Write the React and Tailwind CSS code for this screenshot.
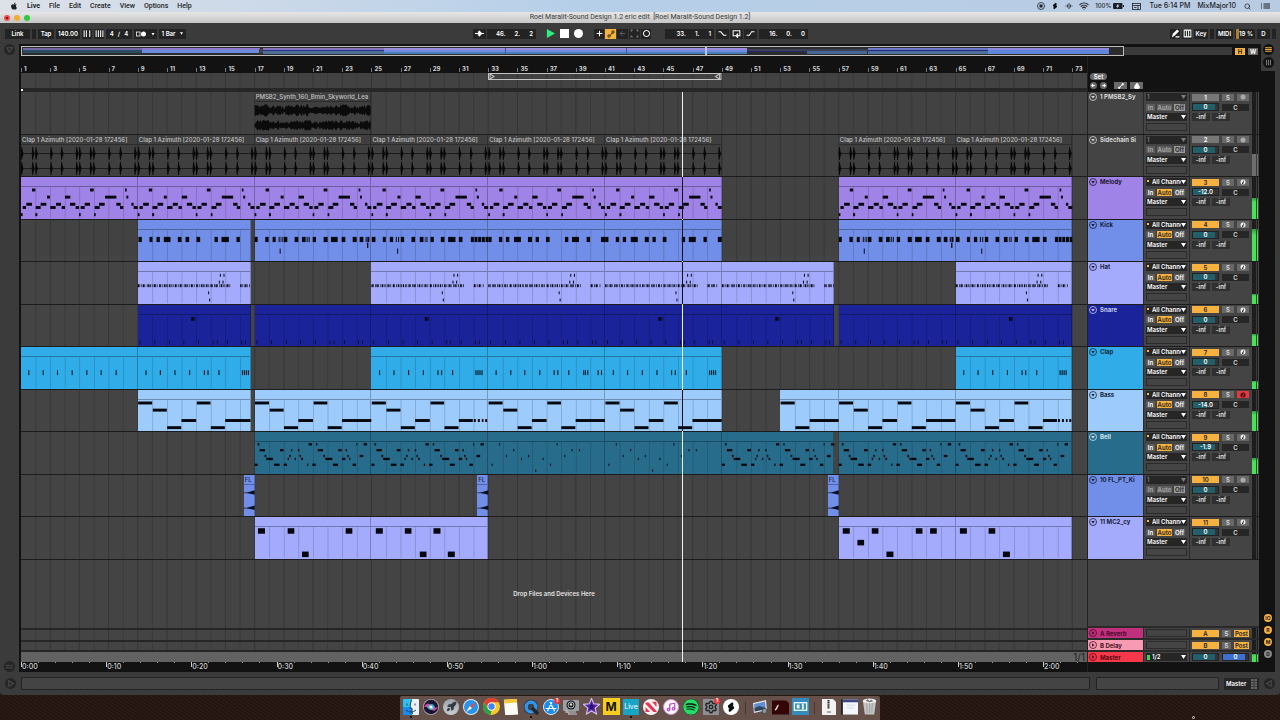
import React from "react";
import { Search, Wifi, Rocket, Lock, Settings, Music } from "lucide-react";
import { FaApple, FaSpotify } from "react-icons/fa";

/* One bar is 43.8 drawing units wide, a lane is 128 units tall. */
const BAR = 43.8;
const TOTAL = 73;
const LANE_W = BAR * TOTAL;
const LANE_H = 128;

const row = (y, h, spans) => spans.map(([a, b]) => [a, b, y, h]);
const ticks = (y, h, w, xs) => xs.map((x) => [x, x + w, y, h]);

const MELODY = [
  ...row(40, 9, [[33, 43], [207, 218], [312, 317]]),
  ...row(62, 9, [[78, 87], [132, 148], [252, 286], [316, 322]]),
  ...row(84, 9, [[16, 33], [59, 76], [105, 120], [147, 163], [191, 207], [234, 251], [286, 299], [331, 338]]),
  ...row(94, 9, [[5, 15], [44, 59], [88, 104], [122, 132], [164, 174], [179, 191], [221, 236], [297, 307], [338, 350]]),
  ...row(116, 9, [[0, 5], [43, 49], [174, 179], [219, 224]]),
];
const KICK_A = row(60, 16, [[2, 12], [35, 44], [56, 66], [78, 98], [120, 131], [143, 154], [176, 187], [230, 240], [251, 273], [296, 306]]);
const KICK_B = [
  ...row(60, 16, [[0, 9], [32, 42], [54, 63], [72, 75], [78, 80], [82, 84], [87, 98], [120, 131], [142, 153], [156, 159], [162, 165], [174, 184], [207, 219], [229, 249], [261, 272], [294, 306], [315, 326], [333, 336], [338, 344]]),
  [75, 78, 96, 16],
  [337, 341, 78, 16],
];
const KICK_C = [
  ...row(60, 16, [[1, 12], [34, 43], [55, 65], [73, 76], [80, 83], [88, 98], [120, 131], [145, 156], [160, 162], [165, 168], [177, 187], [208, 219], [230, 252], [262, 273], [298, 307], [309, 318], [320, 329], [331, 340], [342, 350]]),
  [77, 80, 96, 16],
];
const KICK_D = row(60, 16, [[0, 10], [32, 42], [53, 63], [77, 98], [119, 131], [142, 152], [173, 184], [230, 240], [251, 272], [295, 305], [338, 350]]);
const hatRun = (from, to) => {
  const out = [];
  const step = [5, 6, 4, 5, 7, 4, 6];
  let x = from;
  for (let i = 0; x < to; i++) {
    out.push([x, x + (i % 3 === 0 ? 4 : 2), 73, 9]);
    x += step[i % step.length];
  }
  return out;
};
const HAT = [
  ...hatRun(0, 214),
  ...hatRun(218, 276),
  ...hatRun(307, 337),
  ...ticks(41, 9, 3, [246, 257]),
  ...ticks(62, 9, 3, [243, 254]),
  [211, 214, 95, 9],
  [214, 217, 117, 9],
];
const SNARE = ticks(115, 12, 2, [6, 50, 94, 137, 181, 225, 237, 268, 311, 322]);
const SNARE_FILL = [...SNARE, [160, 168, 43, 12], [170, 172, 43, 12]];
const CLAP_A = ticks(79, 15, 3, [22, 65, 108, 152, 196, 239, 284]);
const CLAP_B = ticks(79, 15, 3, [23, 66, 110, 154, 198, 209, 242, 312, 318, 324, 330]);
const CLAP_C = ticks(79, 15, 3, [22, 66, 108, 153, 196, 207, 240, 285, 290, 297, 328, 338]);
const BASS_BASE = [[1, 43, 40, 9], [45, 87, 62, 9], [88, 130, 116, 9], [131, 175, 94, 9], [177, 218, 40, 9], [219, 261, 116, 9]];
const BASS = [...BASS_BASE, [262, 350, 94, 9]];
const BASS_DOTS = [...BASS_BASE, [262, 304, 94, 9], [307, 313, 94, 9], [319, 325, 94, 9], [331, 336, 94, 9], [341, 347, 94, 9]];
const BASS_CUT = [...BASS_BASE, [262, 338, 94, 9]];
const BASS_SHORT = [[1, 43, 40, 9], [45, 87, 116, 9], [88, 175, 94, 9]];
const BELL = [
  ...row(38, 7, [[9, 14], [162, 172], [184, 188], [305, 308], [327, 337]]),
  ...row(56, 7, [[15, 31], [76, 87], [109, 113], [130, 134], [189, 205], [251, 261], [273, 277]]),
  ...row(74, 7, [[30, 35], [104, 108], [135, 139], [206, 211], [278, 282], [315, 326]]),
  ...row(83, 7, [[35, 55], [99, 103], [120, 124], [140, 145], [212, 233], [262, 272], [283, 287]]),
  ...row(101, 7, [[0, 9], [58, 75], [87, 97], [157, 161], [173, 183], [235, 250], [294, 304]]),
];
const BELL_SPARSE = [
  ...ticks(38, 7, 3, [32, 205]),
  ...ticks(56, 7, 3, [75, 250, 272]),
  ...ticks(74, 7, 3, [53, 119, 228]),
  ...ticks(83, 7, 3, [98, 163]),
  ...ticks(101, 7, 3, [10, 185]),
  ...ticks(119, 7, 3, [141]),
];
const MC_1 = [...row(43, 17, [[10, 31], [99, 119], [273, 293]]), [142, 162, 115, 17]];
const MC_2 = [...row(43, 17, [[13, 34], [100, 120], [186, 207]]), [145, 165, 115, 17], [229, 250, 115, 17]];
const MC_3 = [...row(43, 17, [[12, 33], [99, 119], [231, 251], [274, 294]]), [56, 76, 79, 17], [143, 164, 115, 17]];
const MC_4 = [...row(43, 17, [[13, 34], [99, 119]]), [142, 163, 115, 17]];

/* clip: [start bar, end bar, notes] */
const SIDE = "Clap 1 Azimuth [2020-01-28 172456]";
const eights = (bars, notes) => bars.map((b) => [b, b + 8, notes]);

const TRACKS = [
  { name: "1 PMSB2_Sy", n: 1, bg: "bg-[#444444]", text: "text-[#d8d8d8]", audio: true, wave: "synth", label: "PMSB2_Synth_160_Bmin_Skyworld_Lea", clips: [[17, 25, []]], off: true, vol: "0", meter: 0 },
  { name: "Sidechain Si", n: 2, bg: "bg-[#444444]", text: "text-[#d8d8d8]", audio: true, wave: "claps", label: SIDE, clips: eights([1, 9, 17, 25, 33, 41, 57, 65], []), off: true, vol: "0", meter: 52, grayMeter: true },
  { name: "Melody", n: 3, bg: "bg-[#a083e6]", text: "text-[#1c1430]", clips: eights([1, 9, 17, 25, 33, 41, 57, 65], MELODY), vol: "-12.0", meter: 50, darkHead: true },
  { name: "Kick", n: 4, bg: "bg-[#718fe8]", text: "text-[#141c38]", clips: [[9, 16.75, KICK_A], [17, 25, KICK_B], [25, 33, KICK_C], [33, 41, KICK_D], [41, 49, KICK_D], [57, 65, KICK_B], [65, 73, KICK_C]], vol: "0", meter: 78, darkHead: true },
  { name: "Hat", n: 5, bg: "bg-[#a4abfd]", text: "text-[#1a1c38]", clips: [[9, 16.75, HAT], [25, 33, HAT], [33, 41, HAT], [41, 49, HAT], [49, 56.7, HAT], [65, 73, HAT]], vol: "0", meter: 24, darkHead: true },
  { name: "Snare", n: 6, bg: "bg-[#1a2399]", text: "text-[#c8ccf0]", clips: [[9, 16.75, SNARE_FILL], [17, 25, SNARE], [25, 33, SNARE_FILL], [33, 41, SNARE], [41, 49, SNARE_FILL], [49, 56.7, SNARE_FILL], [57, 65, SNARE], [65, 73, SNARE_FILL]], vol: "0", meter: 30 },
  { name: "Clap", n: 7, bg: "bg-[#30ade9]", text: "text-[#0d2a3a]", clips: [[1, 9, CLAP_A], [9, 16.75, CLAP_B], [25, 33, CLAP_B], [33, 41, CLAP_C], [41, 49, CLAP_B], [65, 73, CLAP_B]], vol: "0", meter: 20 },
  { name: "Bass", n: 8, bg: "bg-[#9ccbfc]", text: "text-[#16283a]", clips: [[9, 16.75, BASS_CUT], [17, 25, BASS], [25, 33, BASS_DOTS], [33, 41, BASS], [41, 49, BASS], [53, 57, BASS_SHORT], [57, 65, BASS], [65, 73, BASS_DOTS]], vol: "-14.0", meter: 49, armed: true, darkHead: true },
  { name: "Bell", n: 9, bg: "bg-[#286c8c]", text: "text-[#cfe4ee]", clips: [[17, 25, BELL], [25, 33, BELL], [33, 41, BELL_SPARSE], [41, 49, BELL_SPARSE], [49, 56.7, BELL], [57, 65, BELL], [65, 73, BELL]], vol: "-1.9", meter: 38 },
  { name: "10 FL_PT_Ki", n: 10, bg: "bg-[#718fe8]", text: "text-[#141c38]", wave: "hit", label: "FL", clips: [[16.25, 17, []], [32.25, 33, []], [56.25, 57, []]], off: true, vol: "0", meter: 0 },
  { name: "11 MC2_cy", n: 11, bg: "bg-[#a4abfd]", text: "text-[#1a1c38]", clips: [[17, 25, MC_1], [25, 33, MC_2], [57, 65, MC_3], [65, 73, MC_4]], vol: "0", meter: 0 },
];

const pct = (bars) => `${(bars / TOTAL) * 100}%`;

function synthPath(x0, x1, cy, amp) {
  const top = [];
  const bottom = [];
  for (let x = x0, i = 0; x <= x1; x += 3, i++) {
    const noise = Math.abs(Math.sin(i * 12.9898 + cy) * 43758.5453) % 1;
    const env = 0.6 + 0.1 * Math.sin(i / 6) + 0.6 * (noise - 0.5);
    top.push(`${x},${cy - amp * env}`);
    bottom.unshift(`${x},${cy + amp * (env * 0.95)}`);
  }
  return [...top, ...bottom].join(" ");
}

const CLAP_HITS = [1, 34, 44, 89, 121, 166, 175, 208, 217, 263, 297, 341];

function Waves({ kind, start, end }) {
  const x0 = (start - 1) * BAR;
  const x1 = (end - 1) * BAR;
  if (kind === "synth") {
    return (
      <g fill="#0b0b0b">
        <polygon points={synthPath(x0, x1, 57, 20)} />
        <polygon points={synthPath(x0, x1, 103, 18)} />
      </g>
    );
  }
  if (kind === "claps") {
    return (
      <g fill="#080808">
        {[57, 103].map((cy) => (
          <g key={cy}>
            <rect x={x0} y={cy - 1} width={x1 - x0} height="2" />
            {CLAP_HITS.map((h) => (
              <polygon
                key={h}
                points={`${x0 + h - 2},${cy} ${x0 + h},${cy - 20} ${x0 + h + 2},${cy - 21} ${x0 + h + 4},${cy - 8} ${x0 + h + 7},${cy} ${x0 + h + 4},${cy + 9} ${x0 + h + 2},${cy + 21} ${x0 + h},${cy + 20}`}
              />
            ))}
          </g>
        ))}
      </g>
    );
  }
  return (
    <g fill="#0a0f20">
      {[55, 102].map((cy) => (
        <g key={cy}>
          <rect x={x0} y={cy - 1} width={x1 - x0} height="2" />
          <polygon points={`${x0 + 8},${cy} ${x1},${cy - 8} ${x1},${cy + 6}`} />
        </g>
      ))}
    </g>
  );
}

function Lane({ track }) {
  return (
    <div className="relative overflow-hidden border-b border-[#1c1c1c]">
      {track.clips.map(([s, e]) => (
        <div
          key={s}
          className={`absolute inset-y-0 overflow-hidden border-r border-black/25 ${track.audio ? "bg-[#3f3f3f]" : track.bg}`}
          style={{ left: pct(s - 1), width: pct(e - s) }}
        >
          <div className="h-[10px] border-b border-black/30 pl-px text-[6px] leading-[9px] font-medium whitespace-nowrap">
            <span className={track.audio ? "text-[#c4c4c4]" : "text-[#1a2550]"}>{track.label}</span>
          </div>
        </div>
      ))}
      <svg viewBox={`0 0 ${LANE_W} ${LANE_H}`} preserveAspectRatio="none" className="absolute inset-0 h-full w-full" aria-hidden="true">
        {track.clips.map(([s, e, notes]) => {
          const lines = [];
          for (let b = Math.ceil(s + 0.01); b < e; b++) lines.push(b);
          return (
            <g key={s}>
              {!track.audio &&
                lines.map((b) => (
                  <rect key={b} x={(b - 1) * BAR} y="31" width="2" height="96" fill="#000" opacity="0.22" />
                ))}
              {notes.map(([a, b, y, h], i) => (
                <rect key={i} x={(s - 1) * BAR + a} y={y - h / 2} width={b - a} height={h} fill="#07080e" />
              ))}
              {track.wave && <Waves kind={track.wave} start={s} end={e} />}
            </g>
          );
        })}
      </svg>
      {track.darkHead && <span className="absolute inset-y-0 left-[62%] z-20 w-px bg-[#10101c]" />}
    </div>
  );
}

function Select({ label, value, dim, children }) {
  return (
    <div className="relative h-2 w-full bg-[#262626]">
      <select
        aria-label={label}
        defaultValue={value}
        className={`block h-2 w-full appearance-none overflow-hidden bg-transparent pr-[6px] text-[6px] leading-[8px] font-semibold ${children ? "pl-[6px]" : "pl-px"} ${dim ? "text-[#7c7c7c]" : "text-white"}`}
      >
        <option>{value}</option>
      </select>
      {children}
      <svg viewBox="0 0 10 8" className={`pointer-events-none absolute top-[2px] right-px h-1 w-[5px] ${dim ? "fill-[#7c7c7c]" : "fill-white"}`} aria-hidden="true">
        <path d="M0 0h10L5 8z" />
      </svg>
    </div>
  );
}

const TINY = "flex h-[7px] items-center justify-center text-[6px] leading-[7px] font-semibold";

function NameCircle({ play }) {
  return (
    <svg viewBox="0 0 16 16" className="h-2 w-2 flex-none" fill="none" stroke="currentColor" strokeWidth="1.6" aria-hidden="true">
      <circle cx="8" cy="8" r="7" />
      <path d={play ? "M6 4.5L11 8l-5 3.5z" : "M4.5 6h7L8 11z"} fill="currentColor" stroke="none" />
    </svg>
  );
}

function Meter({ level, gray }) {
  return (
    <div className="mr-px flex items-end gap-px bg-[#3a3a3a]">
      {[0, 1].map((i) => (
        <div key={i} className={`flex h-full flex-col justify-end ${i ? "w-px" : "w-1"} bg-[#1d1d1d]`}>
          <div className={gray ? "bg-[#6e6e6e]" : "bg-linear-to-b from-[#2f9a40] to-[#45e35a] to-20%"} style={{ height: `${level}%` }} />
        </div>
      ))}
    </div>
  );
}

function Volume({ value, fill }) {
  return (
    <div className="grid h-2 w-[27px] border border-[#222] bg-[#333] *:col-start-1 *:row-start-1">
      <div className={`h-[6px] bg-[#235f6b] ${fill}`} />
      <span className="text-center text-[6px] leading-[6px] font-semibold text-white">{value}</span>
    </div>
  );
}

function TrackHeader({ t }) {
  const active = t.n > 2;
  return (
    <div className="flex gap-px border-b border-[#1c1c1c]">
      <div className={`flex w-[55px] flex-none gap-[3px] overflow-hidden pt-px pl-px ${t.bg} ${t.text}`}>
        <NameCircle />
        <span className="text-[6px] leading-[8px] font-bold whitespace-nowrap">{t.name}</span>
      </div>
      <div className="flex w-[45px] flex-none flex-col gap-[2px] bg-[#444] px-[2px] pt-px">
        <Select label={`${t.name} input`} value={t.off ? "1" : "All Channels"} dim={t.off}>
          {!t.off && <span className="absolute top-[2px] left-px h-[2px] w-[2px] bg-[#ffb84d]" />}
        </Select>
        <div className="flex h-2 items-center gap-[2px]">
          <button className={`${TINY} w-[9px] bg-[#5c5c5c] ${t.off ? "text-[#aaa]" : "text-white"}`}>In</button>
          <button className={`${TINY} w-[15px] ${t.off ? "bg-[#5c5c5c] text-[#aaa]" : "bg-[#f7b13f] text-[#222]"}`}>Auto</button>
          <button className={`${TINY} w-[11px] ${t.off ? "bg-[#9a9a9a] text-[#222]" : "bg-[#5c5c5c] text-white"}`}>Off</button>
        </div>
        <Select label={`${t.name} output`} value="Master" />
        <div className="h-[8px] border border-[#2a2a2a]" />
      </div>
      <div className="flex flex-1 justify-between bg-[#444] pl-[2px]">
        <div className="flex flex-col gap-[2px] pt-px">
          <div className="flex h-2 items-center gap-[3px]">
            <button aria-label={`Track ${t.n} on`} className={`${TINY} w-[27px] ${active ? "bg-[#f7b13f] text-[#222]" : "bg-[#777] text-white"}`}>{t.n}</button>
            <button aria-label={`Solo ${t.name}`} className={`${TINY} w-[12px] bg-[#686868] text-[#ddd]`}>S</button>
            <button aria-label={`Arm ${t.name}`} className={`${TINY} w-[12px] ${t.armed ? "bg-[#e8363f]" : "bg-[#686868]"}`}>
              <svg viewBox="0 0 12 12" className="h-[6px] w-[6px]" aria-hidden="true">
                <circle cx="6" cy="6" r="5" fill={t.off ? "#aaa" : t.armed ? "#3a0a0c" : "#eee"} />
                {!t.off && <path d="M6 2.5v4.2a1.6 1.6 0 1 0 1 1.4V4.8h1.5z" fill={t.armed ? "#e8363f" : "#222"} />}
              </svg>
            </button>
          </div>
          <div className="flex h-2 items-center gap-[3px]">
            <Volume value={t.vol} fill={t.vol === "-12.0" || t.vol === "-14.0" ? "w-[14px]" : "w-[22px]"} />
            <div className="h-[7px] w-[27px] bg-[#262626] text-center text-[6px] leading-[7px] font-semibold text-[#ddd]">C</div>
          </div>
          <div className="flex h-2 items-center gap-[2px] text-center text-[6px] leading-[8px] font-semibold text-[#e4e4e4]">
            <span className="w-[18px] bg-[#303030]">-inf</span>
            <span className="w-[18px] bg-[#303030]">-inf</span>
          </div>
        </div>
        <Meter level={t.meter} gray={t.grayMeter} />
      </div>
    </div>
  );
}

function ReturnRow({ name, letter, bg, text }) {
  return (
    <div className="flex h-3 gap-px border-b-2 border-[#2a2a2a]">
      <div className={`flex w-[55px] flex-none items-center gap-[3px] pl-px ${bg} ${text}`}>
        <NameCircle play />
        <span className="text-[6px] font-bold">{name}</span>
      </div>
      <div className="w-[45px] flex-none bg-[#444] px-[2px] py-px">
        <div className="h-full border border-[#2a2a2a]" />
      </div>
      <div className="flex flex-1 justify-between bg-[#444] pl-[2px]">
        <div className="flex items-center gap-[3px]">
          <button className={`${TINY} w-[27px] bg-[#f7b13f] text-[#222]`}>{letter}</button>
          <button aria-label={`Solo ${name}`} className={`${TINY} w-[9px] bg-[#686868] text-[#ddd]`}>S</button>
          <button className={`${TINY} w-[15px] bg-[#f7b13f] text-[#222]`}>Post</button>
        </div>
        <Meter level={0} />
      </div>
    </div>
  );
}

function MenuBar() {
  return (
    <header className="flex h-3 items-center justify-between bg-linear-to-r from-[#dde1e8] via-[#b6cfe9] via-45% to-[#b9cbe2] text-[7px] leading-[12px] text-[#1b1f26]">
      <nav className="flex items-center gap-[9px] pl-[10px] font-['Roboto','Inter',sans-serif]">
        <FaApple className="h-2 w-2" />
        {["Live", "File", "Edit", "Create", "View", "Options", "Help"].map((m, i) => (
          <a key={m} href="#" className={i ? "font-medium" : "font-bold"}>{m}</a>
        ))}
      </nav>
      <div className="flex items-center gap-[6px] pr-[10px] font-medium whitespace-nowrap">
        <svg viewBox="0 0 16 16" className="h-2 w-2" aria-hidden="true"><circle cx="8" cy="8" r="7" fill="none" stroke="currentColor" strokeWidth="1.5" /><rect x="5" y="5" width="6" height="6" fill="currentColor" /></svg>
        <SpliceMark className="h-2 w-2" color="#111" />
        <svg viewBox="0 0 16 16" className="h-2 w-2" stroke="currentColor" strokeWidth="1.6" aria-hidden="true"><path d="M2 7v2M5 5v6M8 2v12M11 5v6M14 7v2" /></svg>
        <Wifi className="h-[10px] w-[10px]" strokeWidth={2.5} />
        <span className="flex items-center gap-[2px] text-[6px]">100%
          <svg viewBox="0 0 22 12" className="h-[6px] w-[11px]" aria-hidden="true"><rect width="19" height="12" rx="2" fill="#1b1f26" /><rect x="20" y="4" width="2" height="4" fill="#1b1f26" /><path d="M11 1L6 7h3l-1 4 5-6h-3z" fill="#cfe0f2" /></svg>
        </span>
        <svg viewBox="0 0 18 14" className="mx-[2px] h-[7px] w-[9px]" fill="none" stroke="currentColor" strokeWidth="1.6" aria-hidden="true"><rect x="1" y="1" width="16" height="12" /><path d="M1 5h16M12 5v8M4 9h5" /></svg>
        <span className="pr-px">Tue 6:14 PM</span>
        <span className="pr-[2px]">MixMajor10</span>
        <Search className="h-[7px] w-[7px]" strokeWidth={2.5} />
        <svg viewBox="0 0 18 12" className="ml-[4px] h-[6px] w-[9px]" stroke="currentColor" strokeWidth="2" aria-hidden="true"><path d="M0 2h2M5 2h13M0 6h2M5 6h13M0 10h2M5 10h13" /></svg>
      </div>
    </header>
  );
}

function TitleBar() {
  return (
    <div className="grid h-[11px] grid-cols-[1fr_auto_1fr] items-center bg-linear-to-b from-[#e6e6e6] to-[#c6c6c6] px-1 leading-[11px] text-[#3a3a3a]">
      <div className="flex gap-1">
        <button aria-label="Close" className="flex h-[6px] w-[6px] items-center justify-center rounded-full bg-[#ee4c4f]"><span className="h-[2px] w-[2px] rounded-full bg-[#5a0a0a]" /></button>
        <button aria-label="Minimise" className="h-[6px] w-[6px] rounded-full bg-[#f2ae2c]" />
        <button aria-label="Zoom" className="h-[6px] w-[6px] rounded-full bg-[#2fc840]" />
      </div>
      <h1 className="font-['Roboto','Inter',sans-serif] text-[7px] leading-[11px] whitespace-pre">Roel Maralit-Sound Design 1.2 eric edit  [Roel Maralit-Sound Design 1.2]</h1>
    </div>
  );
}

const BOX = "flex h-[10px] items-center justify-center text-[6px] leading-[10px] font-semibold";
const DARK = "bg-[#232323] text-white";

function Icon({ d, label, className = "", tone = "text-white", fill = "none" }) {
  return (
    <button aria-label={label} className={`${BOX} bg-[#232323] ${tone} ${className}`}>
      <svg viewBox="0 0 16 16" className="h-[9px] w-[9px]" fill={fill} stroke="currentColor" strokeWidth="1.8" aria-hidden="true"><path d={d} /></svg>
    </button>
  );
}

function Position({ values, label }) {
  return (
    <div aria-label={label} className={`${BOX} ${DARK} w-[49px] justify-end gap-[9px] pr-[3px]`}>
      {values.map((v, i) => <span key={i}>{v}{i < 2 && "."}</span>)}
    </div>
  );
}

function Transport() {
  return (
    <div className="grid h-[21px] grid-cols-[1fr_auto_1fr] items-center bg-[#3b3b3b] pr-[4px] pl-[5px]">
      <div className="flex gap-[2px]">
        <button className={`${BOX} ${DARK} w-[25px]`}>Link</button>
        <span className={`${BOX} ${DARK} w-[4px]`} />
        <button className={`${BOX} ${DARK} w-[16px]`}>Tap</button>
        <div className={`${BOX} ${DARK} w-[24px]`}>140.00</div>
        <Icon label="Nudge down" className="w-[10px]" d="M2 2v12M6 2v12M12 2v12" />
        <Icon label="Nudge up" className="w-[10px]" d="M2 2v12M6 2v12M10 2v12M14 2v12" />
        <div className={`${BOX} ${DARK} w-[26px] gap-1`}><span>4</span><span>/</span><span>4</span></div>
        <button aria-label="Metronome" className={`${BOX} ${DARK} w-[23px]`}>
          <svg viewBox="0 0 38 12" className="h-[6px] w-[19px]" aria-hidden="true"><rect x="1" y="2" width="7" height="8" fill="none" stroke="#fff" strokeWidth="1.5" /><circle cx="15" cy="6" r="5" fill="#fff" /><path d="M31 4h6l-3 5z" fill="#fff" /></svg>
        </button>
        <button className={`${BOX} ${DARK} w-[27px] gap-[5px]`}>1 Bar<svg viewBox="0 0 6 5" className="h-[3px] w-[3px]" aria-hidden="true"><path d="M0 0h6L3 5z" fill="#fff" /></svg></button>
      </div>
      <div className="flex items-center">
        <Icon label="Follow" className="mr-px w-[13px]" d="M0 8h16M6 4v8M8 4l4 4-4 4z" fill="currentColor" />
        <Position label="Arrangement position" values={[46, 2, 2]} />
        <div className="mx-[10px] flex items-center gap-[5px]">
          <button aria-label="Play"><svg viewBox="0 0 10 10" className="h-[9px] w-[9px]" aria-hidden="true"><path d="M1 0l9 5-9 5z" fill="#2af07c" /></svg></button>
          <button aria-label="Stop" className="h-[9px] w-[9px] bg-white" />
          <button aria-label="Record" className="h-[9px] w-[9px] rounded-full bg-white" />
        </div>
        <div className="flex gap-px pr-[14px] pl-px">
          <Icon label="Overdub" className="w-[10px]" d="M8 3v10M3 8h10" />
          <button aria-label="Automation arm" className={`${BOX} w-[11px] bg-[#f7b13f]`}>
            <svg viewBox="0 0 16 16" className="h-2 w-2" fill="none" stroke="#2a2010" strokeWidth="1.8" aria-hidden="true"><circle cx="4" cy="12" r="2.4" /><circle cx="12" cy="4" r="2.4" /><path d="M6 11c3 0 2-5 5-5" /></svg>
          </button>
          <Icon label="Re-enable automation" className="w-[11px]" tone="text-[#5a5a5a]" d="M13 8H5M8 4L4 8l4 4" />
          <Icon label="Capture" className="w-[11px]" tone="text-[#777]" d="M2 5V2h3M11 2h3v3M14 11v3h-3M5 14H2v-3" />
          <Icon label="Session record" className="w-[10px]" d="M8 2.500a5.500 5.500 0 1 0 .01 0" />
        </div>
        <Position label="Loop start" values={[33, 1, 1]} />
        <div className="mx-[2px] flex gap-px">
          <Icon label="Punch in" className="w-[13px]" d="M1 5h4l5 6h5" />
          <Icon label="Loop" className="w-[13px]" d="M6 12H2V3h12v9h-4M10 9v6l-3-3z" />
          <Icon label="Punch out" className="w-[13px]" d="M1 11h5l4-6h5" />
        </div>
        <Position label="Loop length" values={[16, 0, 0]} />
      </div>
      <div className="flex justify-end gap-[2px]">
        <Icon label="Draw mode" className="w-[10px]" d="M3 13l1-4 7-7 2 2-7 7zM8 14h7" fill="currentColor" />
        <Icon label="Computer keyboard" className="w-[10px]" d="M2 2h12v12H2zM6 2v12M10 2v12" />
        <button className={`${BOX} ${DARK} w-[14px]`}>Key</button>
        <span className={`${BOX} ${DARK} w-[4px]`} />
        <button className={`${BOX} ${DARK} w-[17px]`}>MIDI</button>
        <div className={`${BOX} ${DARK} w-[20px] justify-between pr-px`}><span className="h-full w-[3px] bg-[#b08028]" /><span className="whitespace-nowrap">19 %</span></div>
        <span className={`${BOX} ${DARK} w-[13px]`}>D</span>
        <span className={`${BOX} ${DARK} w-[4px]`} />
      </div>
    </div>
  );
}

function Overview() {
  return (
    <div className="flex h-[10px] items-center">
      <svg viewBox="0 0 1103 10" preserveAspectRatio="none" className="h-[10px] min-w-0 flex-1" aria-label="Arrangement overview">
        <rect width="1103" height="10" fill="#2c2c2c" />
        <rect x="2" y="2" width="120" height="3" fill="#7566a5" /><rect x="2" y="4" width="120" height="3" fill="#294e62" />
        <rect x="121" y="2" width="118" height="2" fill="#8b78cc" /><rect x="121" y="4" width="118" height="3" fill="#6c8be0" />
        <rect x="242" y="2" width="121" height="2" fill="#8473bd" /><rect x="242" y="4" width="121" height="1" fill="#27308e" /><rect x="242" y="5" width="121" height="3" fill="#4c6f96" />
        <rect x="363" y="2" width="363" height="2" fill="#9a8ade" /><rect x="363" y="4" width="363" height="2" fill="#6c8be0" /><rect x="363" y="6" width="363" height="2" fill="#4a7fb8" />
        <rect x="484" y="2" width="1" height="6" fill="#3a5a98" /><rect x="605" y="2" width="1" height="6" fill="#3a5a98" />
        <rect x="726" y="3" width="121" height="2" fill="#3c3f55" /><rect x="726" y="5" width="60" height="1" fill="#262a66" /><rect x="786" y="5" width="60" height="3" fill="#466894" />
        <rect x="847" y="2" width="120" height="3" fill="#6c78cc" /><rect x="847" y="4" width="120" height="1" fill="#232a80" /><rect x="847" y="5" width="120" height="3" fill="#4e6f9c" />
        <rect x="967" y="2" width="121" height="3" fill="#8b86e0" /><rect x="967" y="4" width="121" height="4" fill="#5f86d8" />
        <rect x="238" y="3" width="4" height="4" fill="#444" /><rect x="684" y="1" width="2" height="8" fill="#b8c4e8" />
        <rect x="0.5" y="0.5" width="1102" height="9" fill="none" stroke="#bdbdbd" />
      </svg>
      <div className="mr-[3px] h-2 w-[108px] bg-[#3a3a3a]" />
      <button aria-label="Optimise height" className="mr-[3px] h-[7px] w-[10px] bg-[#f7b13f] text-[6px] leading-[7px] font-bold text-[#222]">H</button>
      <button aria-label="Optimise width" className="mr-px h-[7px] w-[10px] bg-[#666] text-[6px] leading-[7px] font-bold text-white">W</button>
    </div>
  );
}

function Arrangement() {
  const bars = Array.from({ length: 37 }, (_, i) => i * 2 + 1);
  const times = Array.from({ length: 13 }, (_, i) => `${Math.floor(i / 6)}:${(i % 6) * 10 || "00"}`);
  return (
    <section aria-label="Arrangement" className="flex min-w-0 flex-1 flex-col">
      <div className="flex h-[17px] items-end overflow-hidden bg-[#121212] text-[6px] leading-[8px] font-bold text-[#d0d0d0]">
        {bars.map((b) => (
          <div key={b} className="flex h-2 w-[2.7397%] flex-none items-end gap-[2px]">
            <i className="mb-px h-1 w-px flex-none bg-[#777]" />
            <span>{b}</span>
          </div>
        ))}
      </div>
      <div className="relative flex flex-1 flex-col bg-[#444]">
        <svg viewBox="0 0 73 10" preserveAspectRatio="none" className="absolute inset-0 h-full w-full" aria-hidden="true">
          {Array.from({ length: 72 }, (_, i) => (
            <path key={i} d={`M${i + 1} 0V10`} stroke="#363636" strokeWidth="1" vectorEffect="non-scaling-stroke" opacity={i % 2 ? 0.9 : 0.6} />
          ))}
        </svg>
        <div className="relative h-[15px]">
          <svg viewBox="0 0 233 7" preserveAspectRatio="none" className="absolute left-[43.83%] h-[7px] w-[21.9%]" fill="none" stroke="#c4c4c4" aria-label="Loop brace">
            <path d="M.5 .5h232v6H.5zM2 1l4 2.500-4 2.500zM231 1l-4 2.500 4 2.500z" />
          </svg>
        </div>
        <div className="relative h-[4px] bg-[#272727]"><i className="absolute top-px left-0 h-[2px] w-[2px] bg-white" /></div>
        <div className="relative flex flex-1 flex-col">
          <div className="grid h-[468px] grid-rows-11">
            {TRACKS.map((t) => <Lane key={t.n} track={t} />)}
          </div>
          <div className="flex flex-1 items-center justify-center">
            <p className="text-[6px] leading-[8px] font-semibold text-[#e2e2e2]">Drop Files and Devices Here</p>
          </div>
          <div className="h-3 border-t-2 border-[#262626]" />
          <div className="h-3 border-y-2 border-t-[#262626] border-b-[#262626]" />
          <div className="h-[10px] bg-[#626262] pr-[2px] text-right text-[10px] leading-[10px] text-[#1f1f1f]">1/1</div>
          <span className="absolute inset-y-0 left-[62%] z-10 w-px bg-[#efefef]" />
        </div>
      </div>
      <div className="flex h-[10px] overflow-hidden bg-[#121212] text-[7px] leading-[9px] font-medium text-[#d0d0d0]">
        {times.map((t) => (
          <div key={t} className="relative w-[7.99%] flex-none">
            <i className="absolute top-0 left-0 h-[5px] w-px bg-[#ccc]" />
            <i className="absolute top-0 left-1/5 h-px w-px bg-[#999]" />
            <i className="absolute top-0 left-2/5 h-px w-px bg-[#999]" />
            <i className="absolute top-0 left-3/5 h-px w-px bg-[#999]" />
            <i className="absolute top-0 left-4/5 h-px w-px bg-[#999]" />
            <span className="block pl-px">{t}</span>
          </div>
        ))}
      </div>
    </section>
  );
}

function Headers() {
  return (
    <section aria-label="Track headers" className="flex w-[172px] flex-none flex-col border-l border-[#222] bg-[#121212]">
      <div className="flex h-[36px] flex-col justify-end gap-[2px] pb-[3px] pl-[2px]">
        <button className="h-[7px] w-[17px] rounded-full bg-[#6a6a6a] text-[6px] leading-[7px] font-semibold text-white">Set</button>
        <div className="flex items-center gap-[3px] text-white">
          {["M5 3L1 7l4 4M1 7h9", "M7 3l4 4-4 4M11 7H2"].map((d, i) => (
            <button key={d} aria-label={i ? "Next locator" : "Previous locator"} className="flex h-[7px] w-[7px] items-center justify-center rounded-full bg-[#6a6a6a]">
              <svg viewBox="0 0 12 14" className="h-[5px] w-[5px]" fill="none" stroke="currentColor" strokeWidth="3" aria-hidden="true"><path d={d} /></svg>
            </button>
          ))}
          <button aria-label="Automation mode" className="ml-[4px] flex h-[7px] w-[13px] items-center justify-center bg-[#6a6a6a]">
            <svg viewBox="0 0 12 12" className="h-[6px] w-[6px]" stroke="currentColor" strokeWidth="2" fill="currentColor" aria-hidden="true"><circle cx="2.500" cy="9.500" r="1.500" /><circle cx="9.500" cy="2.500" r="1.500" /><path d="M3 9l6-6" /></svg>
          </button>
          <button aria-label="Lock envelopes" className="flex h-[7px] w-[13px] items-center justify-center bg-[#6a6a6a]"><Lock className="h-[6px] w-[6px]" fill="currentColor" strokeWidth={3} /></button>
        </div>
      </div>
      <div className="grid h-[468px] grid-rows-11 bg-[#2a2a2a]">
        {TRACKS.map((t) => <TrackHeader key={t.n} t={t} />)}
      </div>
      <div className="flex-1 bg-[#444]" />
      <div className="bg-[#2a2a2a] pt-[2px]">
        <ReturnRow name="A Reverb" letter="A" bg="bg-[#c0307c]" text="text-[#4a0a2c]" />
        <ReturnRow name="B Delay" letter="B" bg="bg-[#f79bb2]" text="text-[#4a1424]" />
        <div className="flex h-[10px] gap-px">
          <div className="flex w-[55px] flex-none items-center gap-[3px] bg-[#f7374a] pl-px text-[#5a0a14]">
            <NameCircle play />
            <span className="text-[6px] font-bold">Master</span>
          </div>
          <div className="flex w-[45px] flex-none items-center bg-[#444] px-[2px]">
            <Select label="Master output" value="1/2">
              <span className="absolute top-[2px] left-px h-[5px] w-[3px] bg-[#3fd154]" />
            </Select>
          </div>
          <div className="flex flex-1 justify-between bg-[#444] pl-[2px]">
            <div className="flex items-center gap-[3px]">
              <Volume value="0" fill="w-[22px]" />
              <div className="grid h-2 w-[27px] border border-[#222] bg-[#333] *:col-start-1 *:row-start-1">
                <div className="h-[6px] w-[22px] bg-[#3f6fcf]" />
                <span className="text-center text-[6px] leading-[6px] font-semibold text-white">0</span>
              </div>
            </div>
            <Meter level={85} />
          </div>
        </div>
      </div>
      <div className="h-[10px]" />
    </section>
  );
}

function RoundIcon({ d, label, tone = "bg-[#262626] text-[#4c4c4c]", fill = "none" }) {
  return (
    <button aria-label={label} className={`flex h-[11px] w-[11px] flex-none items-center justify-center rounded-full ${tone}`}>
      <svg viewBox="0 0 16 16" className="h-[9px] w-[9px]" fill={fill} stroke="currentColor" strokeWidth="1.8" aria-hidden="true"><path d={d} /></svg>
    </button>
  );
}

function SpliceMark({ className, color }) {
  return (
    <svg viewBox="0 0 16 16" className={className} fill={color} aria-hidden="true">
      <path d="M9.500 1.500L4 6v2.500l2.500 1.200L11 6V2.500zM9.500 6.300L5 10v3.500l1.500 1L12 10V7.500z" />
    </svg>
  );
}

const DOCK_LEFT = [
  ["Finder", <svg viewBox="0 0 16 16" className="h-4 w-4"><rect width="16" height="16" rx="1" fill="#e8f1f8" /><path d="M0 0h9C7 5 7 8 7.500 9H9v7H0z" fill="#1b8cec" /><path d="M0 0h9C7.500 3 7.200 6 7.200 8H0z" fill="#2ec1f5" /><path d="M4 4.500v2M12 4.500v2M3 11c3 2.600 7 2.600 10 0M8.500 1C7 5 7 8 7.300 9.200H9c0 2 0 4 .5 6" fill="none" stroke="#12324f" strokeWidth=".9" /></svg>, true],
  ["Siri", <svg viewBox="0 0 16 16" className="h-4 w-4"><circle cx="8" cy="8" r="8" fill="#aab" /><circle cx="8" cy="8" r="7.200" fill="#181530" /><path d="M1 8c4-6 5-3 7-1s4 2 7 1c-3 5-5 4-7 2s-4-2-7-2z" fill="#d4469a" /><path d="M4 8c2-4 7-4 8 0-2 4-6 4-8 0z" fill="#4cc8f0" opacity=".75" /><circle cx="8" cy="8" r="1.600" fill="#fff" /></svg>],
  ["Launchpad", <span className="flex h-4 w-4 items-center justify-center rounded-full bg-linear-to-b from-[#9aa3ab] to-[#c9ced2]"><Rocket className="h-[11px] w-[11px] text-[#30363c]" fill="#30363c" strokeWidth={1.5} /></span>],
  ["Safari", <svg viewBox="0 0 16 16" className="h-4 w-4"><circle cx="8" cy="8" r="8" fill="#dde6ee" /><circle cx="8" cy="8" r="7" fill="#2793ea" /><path d="M13 3L9 9.200 6.800 7z" fill="#f04a3c" /><path d="M3 13l6-3.800L6.800 7z" fill="#fff" /></svg>],
  ["Chrome", <svg viewBox="0 0 16 16" className="h-[17px] w-[17px]"><circle cx="8" cy="8" r="8" fill="#fbc926" /><path d="M1 4a8 8 0 0 1 14 0H8L4.600 10z" fill="#e2402f" /><path d="M1 4l3.500 6L8 12l-1 4A8 8 0 0 1 1 4z" fill="#2aa04e" /><circle cx="8" cy="8" r="3.900" fill="#fff" /><circle cx="8" cy="8" r="3" fill="#4186f0" /></svg>],
  ["Notes", <svg viewBox="0 0 16 16" className="h-4 w-4"><g transform="rotate(-5 8 8)"><rect x="1.500" y="1" width="13" height="15" fill="#fbfaf4" /><rect x="1.500" y="0" width="13" height="4" fill="#f5c93a" /></g></svg>],
  ["QuickTime Player", <svg viewBox="0 0 16 16" className="h-4 w-4"><circle cx="8" cy="8" r="7.500" fill="#3c4148" /><circle cx="8" cy="8" r="4.800" fill="none" stroke="#2f95ee" strokeWidth="3.200" /><path d="M9 9l6 6" stroke="#22272e" strokeWidth="3.500" /></svg>, true],
  ["App Store", <span className="relative"><span className="flex h-4 w-4 items-center justify-center rounded-full border border-[#d8e8f4] bg-[#1d8cf0]"><svg viewBox="0 0 16 16" className="h-3 w-3" stroke="#fff" strokeWidth="1.600" strokeLinecap="round"><path d="M9 2L3.500 13M7 2l5.500 11M1.500 10h8M12 10h2.500" /></svg></span><b className="absolute -top-px -right-px flex h-[6px] w-[6px] items-center justify-center rounded-full bg-[#f03a3e] text-[5px] leading-none text-white">1</b></span>],
  ["Disk tool", <svg viewBox="0 0 16 16" className="h-4 w-4"><rect y="1" width="16" height="11" rx="1" fill="#999fa4" /><circle cx="8" cy="6" r="4.500" fill="#17191b" /><circle cx="8" cy="6" r="3" fill="none" stroke="#ddd" strokeWidth=".8" /><circle cx="8" cy="5.500" r="1.200" fill="#ddd" /><path d="M2 13h11M5 15h9M3 11l3 4" stroke="#ccc" strokeWidth="1" /></svg>],
  ["iMovie", <svg viewBox="0 0 16 16" className="h-[17px] w-[17px]"><path d="M8 .5l2.200 5 5.500.5-4.200 3.600 1.300 5.500L8 12.200l-4.800 2.900 1.300-5.500L.3 6l5.500-.5z" fill="#5b2bb4" stroke="#d9c4f4" strokeWidth="1" /><path d="M8 4.500l1 2.500 2.500.2-1.900 1.600.6 2.500L8 10l-2.200 1.300.6-2.500L4.500 7.200 7 7z" fill="#2c1070" /></svg>],
  ["M", <span className="flex h-[17px] w-[17px] items-center justify-center bg-[#f8cf1c] text-[12px] leading-none font-bold text-[#151515]">M</span>],
  ["Live", <span className="flex h-4 w-4 items-center justify-center bg-[#18a5c4] text-[7px] leading-none text-white">Live</span>, true],
  ["News", <svg viewBox="0 0 16 16" className="h-4 w-4"><circle cx="8" cy="8" r="8" fill="#f7f3f4" /><path d="M2.500 3.500h3.200l7.800 8.500v1h-3L2.500 5zM2.500 8v5H7zM9 2.800h4.500V8z" fill="#e63452" /></svg>],
  ["Music", <span className="flex h-4 w-4 items-center justify-center rounded-full border border-[#d990d8] bg-[#fafafa]"><Music className="h-[10px] w-[10px] text-[#c04ad0]" strokeWidth={3} /></span>],
  ["Spotify", <span className="flex h-4 w-4 items-center justify-center rounded-full bg-[#141414]"><FaSpotify className="h-4 w-4 text-[#23dc63]" /></span>],
  ["System Preferences", <span className="relative"><span className="flex h-4 w-4 items-center justify-center bg-[#8c8e91]"><Settings className="h-[14px] w-[14px] text-[#24272a]" strokeWidth={2.5} /></span><b className="absolute -top-px -right-px flex h-[6px] w-[6px] items-center justify-center rounded-full bg-[#f03a3e] text-[5px] leading-none text-white">1</b></span>],
  ["Splice", <span className="flex h-4 w-4 items-center justify-center rounded-full bg-white"><SpliceMark className="h-3 w-3" color="#0c0c0c" /></span>],
];
const DOCK_MID = [
  ["Preview", <svg viewBox="0 0 16 16" className="h-4 w-4"><path d="M1 4l13-3 1 10-13 3z" fill="#e8e8e8" /><path d="M2 5l11-2.500.8 7.500-11 2.500z" fill="#5f8fce" /><path d="M2.500 9l5-2 6 2 .3 1-11 2.500z" fill="#31465e" /><circle cx="12.500" cy="12" r="2.500" fill="#8f979e" stroke="#333" strokeWidth=".7" /></svg>],
  ["Flash", <svg viewBox="0 0 18 16" className="h-4 w-[17px]"><path d="M0 1h15l3 3v12H0z" fill="#330505" /><path d="M7 6c-1.500 0-1.500 5-4 5" fill="none" stroke="#f0e6e6" strokeWidth="1.500" /></svg>],
  ["Switcher", <svg viewBox="0 0 18 18" className="h-[17px] w-[17px]"><rect width="18" height="18" fill="#3489bd" /><rect x="2.500" y="5" width="13" height="8" fill="none" stroke="#e6f4fc" strokeWidth="1.500" /><rect x="5" y="7" width="3" height="4" fill="#e6f4fc" /><rect x="10.500" y="6" width="2" height="6" fill="#e6f4fc" /></svg>],
];
const DOCK_RIGHT = [
  ["Archive", <svg viewBox="0 0 14 16" className="h-4 w-[14px]"><path d="M0 0h11l3 3v13H0z" fill="#f2f2f2" /><path d="M6.500 1v9" stroke="#222" strokeWidth="2" strokeDasharray="1.500 .6" /><rect x="5" y="12" width="4" height="2" fill="#aaa" /></svg>],
  ["Document", <svg viewBox="0 0 18 16" className="h-4 w-[17px]"><rect width="3" height="16" fill="#222" /><rect x="2" width="16" height="16" fill="#f4f6fb" /><rect x="2" width="16" height="3" fill="#3b4680" /><path d="M6 6h9M6 9h7" stroke="#cdd3e4" /></svg>],
  ["Trash", <svg viewBox="0 0 16 18" className="h-[17px] w-[15px]"><path d="M1 3h14l-2 14.500H3z" fill="#c4c4c4" /><path d="M5 5l.6 11M8 5v11M11 5l-.6 11" stroke="#a2a2a2" /><ellipse cx="8" cy="3" rx="7.200" ry="2.500" fill="#eee" /><path d="M4 3l2-2 2 2 2-1.500 2 2-4 1z" fill="#777" /></svg>],
];

function DockGroup({ items }) {
  return items.map(([name, icon, running]) => (
    <button key={name} aria-label={name} className="relative flex h-full w-5 items-center justify-center pb-[3px]">
      {icon}
      {running && <i className="absolute bottom-[2px] h-[2px] w-[2px] rounded-full bg-black" />}
    </button>
  ));
}

function Dock() {
  return (
    <footer className="relative flex h-[25px] items-end justify-center bg-[repeating-linear-gradient(35deg,#2c1a14_0px,#2c1a14_1px,#221410_2px,#221410_3px)]">
      <div className="flex h-6 rounded-t-[2px] bg-[#65504a] px-px">
        <DockGroup items={DOCK_LEFT} />
        <i className="mx-1 my-[6px] w-px bg-[#463530]" />
        <DockGroup items={DOCK_MID} />
        <i className="mx-1 my-[6px] w-px bg-[#463530]" />
        <DockGroup items={DOCK_RIGHT} />
      </div>
      <i className="absolute right-[85px] bottom-px h-[3px] w-[3px] rounded-full border border-[#ddd]" />
    </footer>
  );
}

export default function App() {
  return (
    <div className="flex min-h-screen flex-col bg-[#1e120e] font-['Inter','Liberation_Sans',sans-serif]">
      <MenuBar />
      <main className="flex flex-1 flex-col overflow-hidden rounded-b-[3px] bg-[#3b3b3b]">
        <TitleBar />
        <Transport />
        <div className="flex flex-1">
          <div className="flex w-[19px] flex-none flex-col items-center justify-between">
            <RoundIcon label="Show browser" d="M3 5h10l-5 8z" />
            <RoundIcon label="Groove pool" d="M2 7c4-4 6 3 12-1M2 11c4-4 6 3 12-1" />
          </div>
          <div className="flex min-w-0 flex-1 flex-col bg-[#121212] pt-[2px] pr-[2px] pl-[2px]">
            <Overview />
            <div className="flex flex-1">
              <Arrangement />
              <Headers />
            </div>
          </div>
          <div className="flex w-[14px] flex-none flex-col items-center justify-between bg-[#121212]">
            <div className="flex w-full flex-col items-center gap-[2px] bg-[#3b3b3b] pb-[3px]">
              <RoundIcon label="Arrangement view" tone="bg-[#121212] text-[#f7b13f]" d="M2 5h12M2 8h12M2 11h12" />
              <RoundIcon label="Session view" tone="bg-[#121212] text-[#777]" d="M4.500 3v10M8 3v10M11.500 3v10" />
            </div>
            <div className="flex flex-col gap-[4px] pb-[14px]">
              {["IO", "R", "M"].map((s) => (
                <button key={s} className="h-2 w-2 rounded-full bg-[#f7b13f] text-center text-[5px] leading-[8px] font-bold text-[#222]">{s}</button>
              ))}
              <button className="h-2 w-2 rounded-full bg-[#888] text-center text-[5px] leading-[8px] font-bold text-[#222]">D</button>
            </div>
          </div>
          <div className="w-[5px] flex-none" />
        </div>
        <div className="flex h-[23px] items-center pr-[5px] pl-[5px]">
          <RoundIcon label="Show help" d="M5 3l8 5-8 5z" />
          <div className="mr-[6px] ml-[5px] h-[13px] flex-1 rounded-[1px] border border-[#222] bg-[#444]" />
          <div className="mr-[5px] h-[13px] w-[123px] rounded-[1px] border border-[#222] bg-[#444]" />
          <button className="mr-[5px] flex h-3 w-[35px] items-center justify-between bg-[#262626] px-[2px] text-[6px] font-semibold text-white">
            Master
            <svg viewBox="0 0 12 20" className="h-[10px] w-[6px]" aria-hidden="true"><rect width="12" height="20" fill="#666" /><path d="M0 5h12M0 10h12M0 15h12M6 0v20" stroke="#333" strokeWidth="1.500" /></svg>
          </button>
          <RoundIcon label="Show device view" d="M11 3L3 8l8 5z" />
        </div>
      </main>
      <Dock />
    </div>
  );
}
